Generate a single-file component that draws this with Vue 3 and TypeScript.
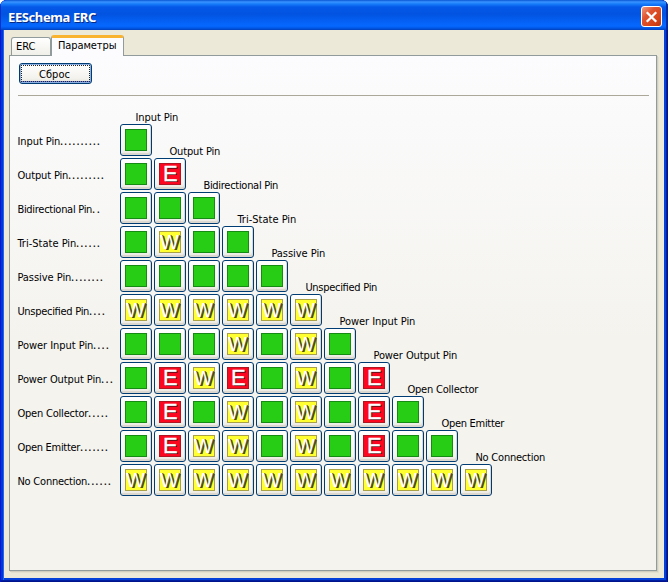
<script setup lang="ts">
interface Pin {
  name: string
  dots: number
  width: number
  rules: string
}

const pins: Pin[] = [
  { name: 'Input Pin', dots: 10, width: 43, rules: 'O' },
  { name: 'Output Pin', dots: 9, width: 51, rules: 'OE' },
  { name: 'Bidirectional Pin', dots: 2, width: 75, rules: 'OOO' },
  { name: 'Tri-State Pin', dots: 6, width: 59, rules: 'OWOO' },
  { name: 'Passive Pin', dots: 8, width: 54, rules: 'OOOOO' },
  { name: 'Unspecified Pin', dots: 4, width: 72, rules: 'WWWWWW' },
  { name: 'Power Input Pin', dots: 4, width: 76, rules: 'OOOWOWO' },
  { name: 'Power Output Pin', dots: 3, width: 84, rules: 'OEWEOWOE' },
  { name: 'Open Collector', dots: 5, width: 71, rules: 'OEOWOWOEO' },
  { name: 'Open Emitter', dots: 7, width: 63, rules: 'OEWWOWOEOO' },
  { name: 'No Connection', dots: 6, width: 70, rules: 'WWWWWWWWWWW' },
]
</script>

<template>
  <div class="window">
    <header class="titlebar">
      <span class="title">EESchema ERC</span>
      <button class="close" aria-label="Close">
        <svg width="20" height="20" viewBox="0 0 20 20"><path d="M5 5 15 15M15 5 5 15" stroke="#fff" stroke-width="2.4" /></svg>
      </button>
    </header>
    <main class="client">
      <nav class="tabs">
        <div class="tab">ERC</div>
        <div class="tab active">Параметры</div>
      </nav>
      <section class="panel">
        <button class="reset"><span>Сброс</span></button>
        <div class="rule"></div>
        <div class="matrix">
          <div class="row first">
            <div class="label"></div>
            <div class="heading"><svg class="text" width="100" height="14"><text x=".4" y="11" :textLength="pins[0].width">{{ pins[0].name }}</text></svg></div>
          </div>
          <div v-for="(pin, i) in pins" :key="pin.name" class="row">
            <div class="label">
              <svg class="text" width="103" height="14">
                <text x=".4" y="11" :textLength="pin.width">{{ pin.name }}</text>
                <text class="dots" :x="pin.width" y="11" :textLength="pin.dots * 4">{{ '.'.repeat(pin.dots) }}</text>
              </svg>
            </div>
            <button v-for="(r, j) in pin.rules" :key="j" class="cell">
              <span class="mark" :class="'mark-' + r">{{ r === 'O' ? '' : r }}</span>
            </button>
            <div v-if="i < pins.length - 1" class="heading">
              <svg class="text" width="100" height="14"><text x=".4" y="11" :textLength="pins[i + 1].width">{{ pins[i + 1].name }}</text></svg>
            </div>
          </div>
        </div>
      </section>
    </main>
  </div>
</template>

<style>
body { margin: 0; background: #fff; }
</style>

<style scoped>
* { box-sizing: border-box; }
.window {
  width: 668px; height: 582px; display: flex; flex-direction: column;
  padding: 0 4px 4px; border-radius: 7px 7px 0 0; overflow: hidden;
  font: 11px "DejaVu Sans Condensed", "DejaVu Sans", sans-serif; font-stretch: condensed; color: #000;
  background: #0831d9;
  box-shadow: inset 1px 0 #0019cf, inset -1px 0 #00138c, inset -2px 0 #001ea0, inset 0 -1px #00138c, inset 0 -2px #001ea0, inset 3px 0 #0831d9, inset 4px 0 #166aee, inset -4px -4px #0441d8;
}
.titlebar {
  flex: none; height: 30px; margin: 0 -4px; padding: 3px 6px 0 8px; display: flex; align-items: center; justify-content: space-between;
  background: linear-gradient(#0958d4 0, #3a93ff 2px, #167cfa 4px, #0458e8 7px, #0253e0 14px, #0562f6 22px, #0668ff 26px, #0158e8 28px, #0240bd 30px);
  box-shadow: inset 1px 0 #0831c9, inset -2px 0 #002ba8;
}
.title { font: bold 13px "Noto Sans", sans-serif; font-stretch: normal; letter-spacing: -.4px; color: #fff; text-shadow: 1px 1px #082a82; white-space: nowrap; }
.close {
  width: 21px; height: 21px; padding: 0; border: 1px solid #fff; border-radius: 3px; display: flex; align-items: center; justify-content: center;
  background: linear-gradient(135deg, #f09a80, #df5430 35%, #d64217 75%, #b83710);
}
.client { flex: 1; display: flex; flex-direction: column; padding: 5px 7px 7px 5px; background: #ece9d8; }
.tabs { height: 20px; flex: none; display: flex; align-items: flex-end; padding-left: 2px; position: relative; }
.tab {
  height: 18px; width: 40px; padding: 2px 0 0 4px; line-height: 14px; border: 1px solid #919b9c; border-bottom: 0;
  border-radius: 3px 3px 0 0; background: linear-gradient(#fff, #f0efe8);
}
.tab.active { height: 21px; width: 73px; margin-bottom: -1px; padding: 1px 0 0 6px; border-top: 3px solid #f9b32f; background: #fcfcfe; white-space: nowrap; letter-spacing: -.1px; }
.panel {
  flex: 1; padding: 7px 7px 0 7px; border: 1px solid #919b9c; box-shadow: 1px 1px #d0cebf, 2px 2px #e3e0d0;
  background: linear-gradient(#fcfcfe, #f4f3ee 55%);
}
.reset {
  display: block; width: 73px; height: 21px; margin-left: 2px; padding: 1px; border: 1px solid #003c74; border-radius: 3px;
  background: linear-gradient(#fff, #f3f2ed 75%, #e4e1d5); box-shadow: inset 0 0 0 1px #8eafe2, inset 0 -2px #6982ee;
  font: inherit; color: #000;
}
.reset span { display: block; height: 17px; line-height: 17px; padding-right: 2px; border: 1px dotted #222; }
.rule { height: 1px; margin: 11px 0 0 1px; background: #aca899; }
.matrix { padding-top: 14px; }
.row { display: flex; height: 34px; gap: 2px; }
.row.first { height: 14px; }
.label { width: 101px; flex: none; padding-top: 10px; }
.heading { padding: 20px 0 0 15px; }
.row.first .heading { padding-top: 0; }
.text { display: block; overflow: visible; }
.text text { font: 11px "DejaVu Sans Condensed", "DejaVu Sans", sans-serif; font-stretch: condensed; }
.text .dots { stroke: #000; stroke-width: .2; }
.cell {
  width: 32px; height: 32px; flex: none; padding: 4px; border: 1px solid #003c74; border-radius: 3px;
  display: flex; align-items: flex-start; justify-content: flex-start;
  background: linear-gradient(#fff, #f5f4f0 80%, #e8e5dc); box-shadow: inset -1px -2px #dcd8cf;
}
.mark {
  display: block; flex: none; width: 22px; height: 22px; border: 1px solid; text-align: left; white-space: nowrap;
  font: 22px/20px "Liberation Sans", Arial, sans-serif; font-stretch: normal; color: #fff;
}
.mark-O { background: #27cd14; border-color: #168b13; }
.mark-E { background: #fb0820; border-color: #b01522; padding-left: 3px; line-height: 19px; text-shadow: 1px 1px #53121a; -webkit-text-stroke: .3px #fff; }
.mark-W { background: #ffff32; border-color: #aaa044; line-height: 20px; font-size: 20px; text-shadow: 1px 0 #4b4b20, 2px 1px #4b4b20; }
</style>
